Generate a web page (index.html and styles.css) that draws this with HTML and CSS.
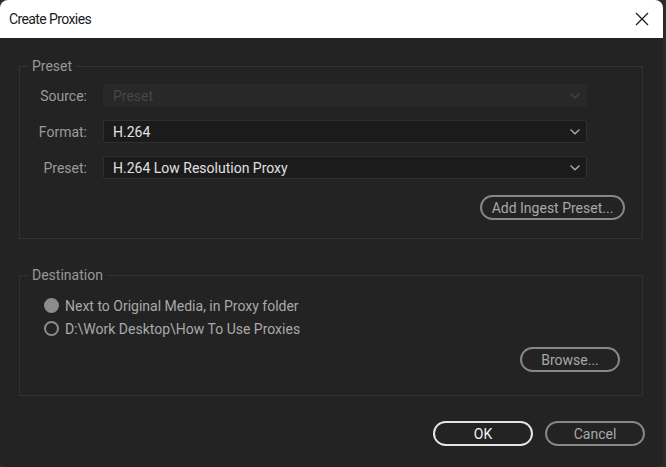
FILE: index.html
```html
<!DOCTYPE html>
<html lang="en">
<head>
  <meta charset="UTF-8" />
  <title>Create Proxies</title>
  <link rel="stylesheet" href="styles.css">
</head>
<body>
  <div class="window">
    <div class="titlebar">
      <span class="title">Create Proxies</span>
      <svg class="close" width="14" height="14" viewBox="0 0 14 14">
        <path d="M1 1 L13 13 M13 1 L1 13" stroke="#1a1a1a" stroke-width="1.2" fill="none" />
      </svg>
    </div>

    <div class="content">
      <fieldset class="group preset-group">
        <legend>Preset</legend>

        <div class="row">
          <label>Source:</label>
          <div class="select disabled">
            <span>Preset</span>
            <svg class="chevron" width="10" height="6" viewBox="0 0 10 6"><path d="M0.5 0.5 L5 4.8 L9.5 0.5" /></svg>
          </div>
        </div>
        <div class="row">
          <label>Format:</label>
          <div class="select">
            <span>H.264</span>
            <svg class="chevron" width="10" height="6" viewBox="0 0 10 6"><path d="M0.5 0.5 L5 4.8 L9.5 0.5" /></svg>
          </div>
        </div>
        <div class="row">
          <label>Preset:</label>
          <div class="select">
            <span>H.264 Low Resolution Proxy</span>
            <svg class="chevron" width="10" height="6" viewBox="0 0 10 6"><path d="M0.5 0.5 L5 4.8 L9.5 0.5" /></svg>
          </div>
        </div>

        <div class="btn-row">
          <button class="pill ingest">Add Ingest Preset...</button>
        </div>
      </fieldset>

      <fieldset class="group dest-group">
        <legend>Destination</legend>

        <div class="radio-row">
          <span class="radio checked"></span>
          <span>Next to Original Media, in Proxy folder</span>
        </div>
        <div class="radio-row">
          <span class="radio"></span>
          <span>D:\Work Desktop\How To Use Proxies</span>
        </div>

        <div class="btn-row">
          <button class="pill browse">Browse...</button>
        </div>
      </fieldset>

      <div class="actions">
        <button class="pill primary">OK</button>
        <button class="pill">Cancel</button>
      </div>
    </div>
  </div>
</body>
</html>
```

FILE: styles.css
```css
* { box-sizing: border-box; }

body {
  margin: 0;
  background: #2a2a2a;
  font-family: Roboto, "Noto Sans", sans-serif;
  font-size: 14px;
  width: 666px;
  height: 467px;
  overflow: hidden;
}

.window {
  width: 663px;
  height: 467px;
  background: #232323;
  border-radius: 8px;
  overflow: hidden;
}

.titlebar {
  height: 38px;
  background: #fff;
  display: flex;
  align-items: center;
  justify-content: space-between;
  padding: 0 14px 0 9px;
}

.title {
  font-size: 14px;
  letter-spacing: -0.6px;
  color: #1a1a1a;
}

.close {
  margin-top: -1px;
}

.content {
  padding: 20px 18px 0 19px;
}

.group {
  margin: 0 2px 0 0;
  padding: 0;
  border: 1px solid #323232;
  min-width: 0;
}

.group legend {
  margin-left: 8px;
  padding: 0 4px;
  line-height: 16px;
  font-size: 14px;
  color: #979797;
}

.preset-group {
  padding-top: 10px;
  padding-bottom: 18px;
}

.row {
  display: flex;
  align-items: center;
  gap: 16px;
  margin-bottom: 13px;
}

.row label {
  width: 67px;
  text-align: right;
  color: #9a9a9a;
}

.select {
  width: 484px;
  height: 23px;
  background: #1b1b1b;
  border: 1px solid #2f2f2f;
  border-radius: 2px;
  display: flex;
  align-items: center;
  justify-content: space-between;
  padding: 0 6px 0 9px;
  color: #e0e0e0;
}

.select .chevron path {
  fill: none;
  stroke: #b0b0b0;
  stroke-width: 1.2;
}

.select.disabled {
  background: #282828;
  border-color: #282828;
  color: #474747;
}

.select.disabled .chevron path {
  stroke: #444;
}

.btn-row {
  display: flex;
  justify-content: flex-end;
}

.pill {
  height: 25px;
  border: 2px solid #878787;
  border-radius: 13px;
  background: transparent;
  color: #a8a8a8;
  font-family: Roboto, "Noto Sans", sans-serif;
  font-size: 14px;
  padding: 0;
  width: 100px;
}

.ingest {
  width: 145px;
  margin: 3px 17px 0 0;
}

.dest-group {
  margin-top: 28px;
  padding-top: 11px;
  padding-bottom: 23px;
}

.radio-row {
  display: flex;
  align-items: center;
  height: 23px;
  padding-left: 24px;
  gap: 6px;
  color: #a9a9a9;
}

.radio {
  width: 15px;
  height: 15px;
  border-radius: 50%;
  border: 2px solid #8c8c8c;
}

.radio.checked {
  background: #8c8c8c;
}

.browse {
  margin: 7px 22px 0 0;
}

.actions {
  display: flex;
  justify-content: flex-end;
  gap: 12px;
  margin-top: 25px;
}

.pill.primary {
  border-color: #e4e4e4;
  color: #f2f2f2;
}
```
